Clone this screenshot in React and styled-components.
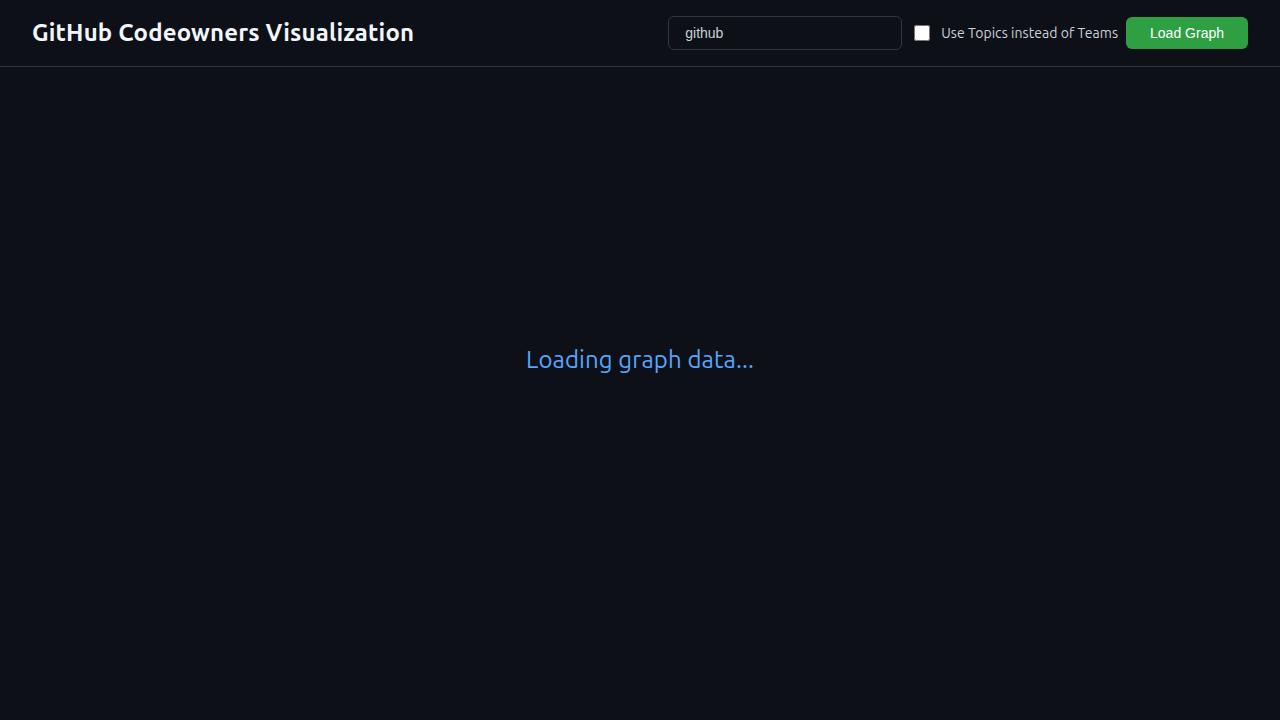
import React from "react";
import styled, { createGlobalStyle } from "styled-components";

const GlobalStyle = createGlobalStyle`
  html, body { margin: 0; padding: 0; background: #0d1117; }
  body { font-family: Ubuntu, "Noto Sans", "Open Sans", sans-serif; color: #c9d1d9; }
  * { box-sizing: content-box; }
`;

const Shell = styled.div`
  position: relative;
  height: 100vh;
  display: flex;
  flex-direction: column;
  background: #0d1117;
  overflow: hidden;
`;

const Header = styled.header`
  display: flex;
  align-items: center;
  justify-content: space-between;
  padding: 16px 32px;
  border-bottom: 1px solid #30363d;
  background: #0d1117;
`;

const Title = styled.h1`
  margin: 0 0 2px;
  font-size: 24px;
  font-weight: 700;
  letter-spacing: 0.16px;
  color: #f0f6fc;
`;

const Controls = styled.div`
  display: flex;
  align-items: center;
  gap: 8px;
`;

const OrgInput = styled.input`
  width: 200px;
  padding: 8px 16px;
  border: 1px solid #30363d;
  border-radius: 6px;
  background: #0d1117;
  color: #c9d1d9;
  font-family: "Liberation Sans", Arial, sans-serif;
  font-size: 14px;
  line-height: 16px;
  outline: none;
`;

const ToggleLabel = styled.label`
  display: flex;
  align-items: center;
  gap: 8px;
  font-size: 14px;
  letter-spacing: 0.05px;
  color: #c9d1d9;
`;

const Checkbox = styled.input`
  width: 16px;
  height: 16px;
  margin: 3px 3px 3px 4px;
`;

const LoadButton = styled.button`
  padding: 8px 24px;
  border: none;
  border-radius: 6px;
  background: #2ea043;
  color: #ffffff;
  font-family: "Liberation Sans", Arial, sans-serif;
  font-size: 14px;
  line-height: 16px;
  cursor: pointer;
`;

const Canvas = styled.main`
  flex: 1;
`;

const LoadingOverlay = styled.div`
  position: absolute;
  inset: 0;
  display: flex;
  align-items: center;
  justify-content: center;
  pointer-events: none;
`;

const LoadingText = styled.div`
  font-size: 24px;
  letter-spacing: 0.1px;
  color: #58a6ff;
  margin-bottom: 2px;
`;

export default function App() {
  return (
    <>
      <GlobalStyle />
      <Shell>
        <Header>
          <Title>GitHub Codeowners Visualization</Title>
          <Controls>
            <OrgInput type="text" defaultValue="github" />
            <ToggleLabel>
              <Checkbox type="checkbox" />
              Use Topics instead of Teams
            </ToggleLabel>
            <LoadButton>Load Graph</LoadButton>
          </Controls>
        </Header>
        <Canvas />
        <LoadingOverlay>
          <LoadingText>Loading graph data...</LoadingText>
        </LoadingOverlay>
      </Shell>
    </>
  );
}
